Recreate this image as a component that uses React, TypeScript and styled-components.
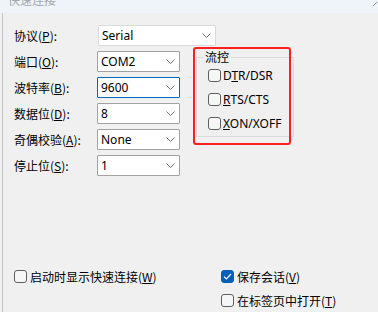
import React from 'react'
import styled, { createGlobalStyle } from 'styled-components'

const GlobalStyle = createGlobalStyle`
  body {
    margin: 0;
    background: #f0f0f0;
    font-family: "Noto Sans", "Noto Sans CJK SC", sans-serif;
    font-size: 12px;
    color: #000;
  }
`

const Window = styled.div`
  width: 378px;
  height: 312px;
  overflow: hidden;
  display: flex;
  flex-direction: column;
`

const TitleBar = styled.div`
  height: 13px;
  flex: none;
  background: #eef4f9;
  overflow: hidden;
  display: flex;
  justify-content: space-between;
`

const Title = styled.div`
  margin: -7px 0 0 8px;
  line-height: 14px;
  font-size: 12px;
  color: #a3a8ad;
  font-family: "Noto Sans CJK SC", sans-serif;
`

const Body = styled.div`
  flex: 1;
  margin-left: 2px;
  border-left: 1px solid #c6c6c6;
  display: flex;
  flex-direction: column;
`

const FormGrid = styled.div`
  display: grid;
  grid-template-columns: 83px 83px 1fr;
  grid-auto-rows: 21px;
  row-gap: 5px;
  align-items: center;
  padding: 12px 0 0 11px;
`

const Label = styled.div`
  grid-column: 1;
  font-family: "Noto Sans CJK SC", sans-serif;
  white-space: nowrap;
`

const Key = styled.span`
  text-decoration: underline;
  text-underline-offset: 1px;
`

const Select = styled.div<{ $width?: number; $focus?: boolean; $light?: boolean }>`
  grid-column: 2;
  box-sizing: border-box;
  width: ${(p) => p.$width ?? 83}px;
  height: 21px;
  background: #fff;
  border: 1px solid ${(p) => (p.$focus ? '#0067c0' : p.$light ? '#dadada' : '#a2a2a2')};
  border-radius: 1px;
  display: flex;
  align-items: center;
  justify-content: space-between;
  padding: 0 4px 0 3px;
  line-height: 1;
`

const Chevron = () => (
  <svg width="9" height="5" viewBox="0 0 9 5">
    <path d="M0.5 0.5 L4.5 4.5 L8.5 0.5" fill="none" stroke="#707070" strokeWidth="1" />
  </svg>
)

const GroupWrap = styled.div`
  grid-column: 3;
  grid-row: 2 / span 4;
  align-self: start;
  position: relative;
  margin: -4px 0 0 13px;
  width: 98px;
  height: 98px;
`

const Highlight = styled.div`
  position: absolute;
  inset: 0;
  border: 2.5px solid #ff1f1f;
  border-radius: 3px;
  pointer-events: none;
`

const Group = styled.fieldset`
  box-sizing: border-box;
  margin: 3px 0 0 3px;
  width: 98px;
  height: 87px;
  border: 1px solid #dadada;
  padding: 5px 0 0 11px;
  display: flex;
  flex-direction: column;
  gap: 11px;
`

const Legend = styled.legend`
  margin-left: -5px;
  padding: 0 2px;
  line-height: 14px;
  font-family: "Noto Sans CJK SC", sans-serif;
`

const CheckRow = styled.div`
  display: flex;
  align-items: center;
  height: 13px;
  gap: 2px;
  white-space: nowrap;
  font-family: "Noto Sans", "Noto Sans CJK SC", sans-serif;
`

const Box = styled.span<{ $checked?: boolean }>`
  box-sizing: border-box;
  width: 13px;
  height: 13px;
  flex: none;
  border-radius: 3px;
  border: 1px solid ${(p) => (p.$checked ? '#005fb8' : '#5f5f5f')};
  background: ${(p) => (p.$checked ? '#005fb8' : '#f6f6f6')};
  display: flex;
  align-items: center;
  justify-content: center;
`

const Check = ({ checked }: { checked?: boolean }) => (
  <Box $checked={checked}>
    {checked && (
      <svg width="9" height="7" viewBox="0 0 9 7">
        <path d="M1 3.6 L3.4 6 L8 1" fill="none" stroke="#fff" strokeWidth="1.2" />
      </svg>
    )}
  </Box>
)

const Bottom = styled.div`
  display: grid;
  grid-template-columns: 207px 1fr;
  grid-auto-rows: 13px;
  row-gap: 11px;
  margin-top: 94px;
  padding-left: 11px;
`

const BottomRow = styled(CheckRow)<{ $col: number }>`
  grid-column: ${(p) => p.$col};
  gap: 3px;
  font-family: "Noto Sans CJK SC", sans-serif;
`

const rows = [
  { label: '数据位', key: 'D', value: '8' },
  { label: '奇偶校验', key: 'A', value: 'None' },
  { label: '停止位', key: 'S', value: '1' },
]

export default function App() {
  return (
    <>
      <GlobalStyle />
      <Window>
        <TitleBar>
          <Title>快速连接</Title>
          <svg width="6" height="8" viewBox="0 0 6 8">
            <path d="M1 6 L5 2" stroke="#8a8a8a" strokeWidth="1" />
          </svg>
        </TitleBar>
        <Body>
          <FormGrid>
            <Label>
              协议(<Key>P</Key>):
            </Label>
            <Select $width={118} $light style={{ marginLeft: 1 }}>
              Serial
              <Chevron />
            </Select>
            <Label>
              端口(<Key>O</Key>):
            </Label>
            <Select>
              COM2
              <Chevron />
            </Select>
            <GroupWrap>
              <Group>
                <Legend>流控</Legend>
                <CheckRow>
                  <Check />
                  <span>
                    D<Key>T</Key>R/DSR
                  </span>
                </CheckRow>
                <CheckRow>
                  <Check />
                  <span>
                    <Key>R</Key>TS/CTS
                  </span>
                </CheckRow>
                <CheckRow>
                  <Check />
                  <span>
                    <Key>X</Key>ON/XOFF
                  </span>
                </CheckRow>
              </Group>
              <Highlight />
            </GroupWrap>
            <Label>
              波特率(<Key>B</Key>):
            </Label>
            <Select $focus>
              9600
              <Chevron />
            </Select>
            {rows.map((r) => (
              <React.Fragment key={r.key}>
                <Label>
                  {r.label}(<Key>{r.key}</Key>):
                </Label>
                <Select>
                  {r.value}
                  <Chevron />
                </Select>
              </React.Fragment>
            ))}
          </FormGrid>
          <Bottom>
            <BottomRow $col={1}>
              <Check />
              <span>
                启动时显示快速连接(<Key>W</Key>)
              </span>
            </BottomRow>
            <BottomRow $col={2}>
              <Check checked />
              <span>
                保存会话(<Key>V</Key>)
              </span>
            </BottomRow>
            <BottomRow $col={2}>
              <Check />
              <span>
                在标签页中打开(<Key>T</Key>)
              </span>
            </BottomRow>
          </Bottom>
        </Body>
      </Window>
    </>
  )
}
